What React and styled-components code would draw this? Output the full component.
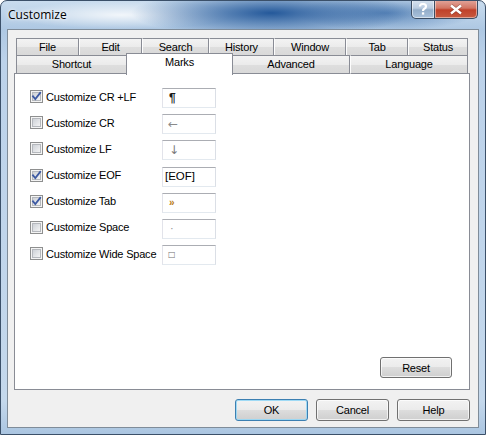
import React from "react";
import styled, { createGlobalStyle, css } from "styled-components";

const GlobalStyle = createGlobalStyle`
  html, body { margin: 0; padding: 0; background: #ffffff; }
  * { box-sizing: border-box; }
`;

const UI_FONT = `"Liberation Sans", Arial, sans-serif`;

const Window = styled.div`
  width: 486px;
  height: 435px;
  border: 1px solid #3b5069;
  border-radius: 7px 7px 0 0;
  overflow: hidden;
  display: flex;
  flex-direction: column;
  background:
    radial-gradient(ellipse 140px 24px at 270px 12px, rgba(28, 82, 150, 0.95), rgba(28, 82, 150, 0) 100%),
    radial-gradient(ellipse 90px 18px at 385px 12px, rgba(60, 110, 170, 0.75), rgba(60, 110, 170, 0) 100%),
    radial-gradient(ellipse 110px 14px at 120px 14px, rgba(255, 255, 255, 0.8), rgba(255, 255, 255, 0) 100%),
    linear-gradient(180deg, #c9dcee 0px, #aec8e3 28px, #bcd2ea 60px, #c4d8ec 400px, #a9c4e0 435px);
  font-family: ${UI_FONT};
  letter-spacing: -0.2px;
`;

const TitleBar = styled.div`
  height: 28px;
  flex: none;
  display: flex;
  align-items: flex-start;
  justify-content: space-between;
  padding: 0 7px 0 7px;
`;

const Title = styled.div`
  font-family: "Open Sans", "Noto Sans", sans-serif;
  font-size: 12px;
  letter-spacing: 0;
  color: #000;
  line-height: 14px;
  margin-top: 7px;
  text-shadow: 0 0 6px rgba(255, 255, 255, 0.9), 0 0 3px rgba(255, 255, 255, 0.9);
`;

const Controls = styled.div`
  display: flex;
  margin-top: -1px;
`;

const CtrlButton = styled.div`
  height: 19px;
  display: flex;
  align-items: center;
  justify-content: center;
  border: 1px solid #3c4d63;
  border-top: none;
  ${(p) =>
    p.$close
      ? css`
          width: 43px;
          border-radius: 0 0 5px 0;
          border-left: none;
          background: linear-gradient(180deg, #e3a79d 0%, #d27563 45%, #c0412a 55%, #c75a40 100%);
          box-shadow: inset 0 0 0 1px rgba(255, 255, 255, 0.45);
        `
      : css`
          width: 24px;
          border-radius: 0 0 0 5px;
          background: linear-gradient(180deg, #d9e4f0 0%, #b9cbe0 45%, #93adc9 55%, #a9c1dc 100%);
          box-shadow: inset 0 0 0 1px rgba(255, 255, 255, 0.5);
        `}
`;

const Client = styled.div`
  flex: none;
  width: 472px;
  height: 399px;
  margin: 0 0 0 6px;
  border: 1px solid #7f8c99;
  background: #f0f0f0;
  padding: 8px 8px 0 6px;
  display: flex;
  flex-direction: column;
`;

const TabArea = styled.div`
  display: flex;
  flex-direction: column;
  padding: 0 2px;
`;

const TabRow = styled.div`
  display: flex;
  height: ${(p) => p.$h}px;
  margin-top: ${(p) => p.$mt || 0}px;
  position: relative;
`;

const Tab = styled.div`
  flex: none;
  height: 100%;
  display: flex;
  align-items: center;
  justify-content: center;
  font-size: 11px;
  color: #000;
  white-space: nowrap;
  border-top: 1px solid #898c95;
  border-right: 1px solid #898c95;
  border-left: 1px solid #fdfdfd;
  border-bottom: 1px solid #898c95;
  background: linear-gradient(180deg, #f3f3f3 0%, #ebebeb 50%, #dedede 52%, #d9d9d9 100%);
  padding-bottom: 1px;
  &:first-child {
    border-left-color: #898c95;
  }
  ${(p) =>
    p.$active &&
    css`
      position: relative;
      z-index: 2;
      height: 22px;
      margin-top: -2px;
      margin-left: -1px;
      margin-right: -1px;
      border-left-color: #898c95;
      border-bottom: none;
      background: #ffffff;
      align-items: flex-start;
      padding-top: 2px;
    `}
`;

const Panel = styled.div`
  width: 456px;
  height: 317px;
  margin: -1px 0 0 0;
  border: 1px solid #898c95;
  background: #ffffff;
  display: flex;
  flex-direction: column;
  padding: 14px 0 0 15px;
`;

const OptionList = styled.div`
  display: flex;
  flex-direction: column;
  gap: 6.2px;
`;

const OptionRow = styled.div`
  display: grid;
  grid-template-columns: 132px 54px;
  align-items: center;
  height: 20px;
`;

const CheckLabel = styled.label`
  display: flex;
  align-items: center;
  gap: 3px;
  font-size: 11px;
  color: #000;
  white-space: nowrap;
  margin-top: -3px;
`;

const MarkBox = styled.div`
  width: 54px;
  height: 20px;
  border: 1px solid #abadb3;
  border-bottom-color: #e3e9ef;
  border-left-color: #e2e3ea;
  border-right-color: #dbdfe6;
  background: #fff;
  display: flex;
  align-items: center;
  padding-left: ${(p) => p.$pl}px;
  font-family: ${(p) => p.$font || UI_FONT};
  font-size: ${(p) => p.$size}px;
  font-weight: ${(p) => (p.$bold ? 700 : 400)};
  color: ${(p) => p.$color};
  letter-spacing: 0;
  line-height: 1;
`;

const PanelFooter = styled.div`
  margin-top: auto;
  display: flex;
  justify-content: flex-end;
  padding: 0 17px 11px 0;
`;

const Button = styled.button`
  width: ${(p) => p.$w || 73}px;
  height: ${(p) => p.$h || 22}px;
  font-family: ${UI_FONT};
  font-size: 11px;
  letter-spacing: -0.2px;
  color: #000;
  padding: 0;
  border: 1px solid ${(p) => (p.$default ? "#3c7fb1" : "#707070")};
  border-radius: 3px;
  background: linear-gradient(180deg, #f2f2f2 0%, #ebebeb 49%, #dddddd 50%, #cfcfcf 100%);
  box-shadow: inset 0 0 0 1px ${(p) => (p.$default ? "rgba(150, 215, 245, 0.9)" : "rgba(255, 255, 255, 0.7)")};
  cursor: default;
`;

const ButtonRow = styled.div`
  display: flex;
  justify-content: flex-end;
  gap: 8px;
  margin-top: 9px;
`;

function CheckBox({ checked }) {
  return (
    <svg width="13" height="13" viewBox="0 0 13 13">
      <defs>
        <linearGradient id="cbfill" x1="0" y1="0" x2="1" y2="1">
          <stop offset="0" stopColor="#cbcfd5" />
          <stop offset="1" stopColor="#f6f6f6" />
        </linearGradient>
      </defs>
      <rect x="0.5" y="0.5" width="12" height="12" fill="#f4f4f4" stroke="#8e8f8f" />
      <rect x="2.5" y="2.5" width="8" height="8" fill="url(#cbfill)" stroke="#b5b8bd" strokeWidth="1" />
      {checked && (
        <path d="M3 6.3 L5.3 9 L10.2 2.8" fill="none" stroke="#3d5aa3" strokeWidth="1.8" strokeLinecap="square" />
      )}
    </svg>
  );
}

const row1 = [
  ["File", 63],
  ["Edit", 63],
  ["Search", 67],
  ["History", 65],
  ["Window", 72],
  ["Tab", 62],
  ["Status", 60],
];

const row2 = [
  ["Shortcut", 111],
  ["Marks", 107, true],
  ["Advanced", 118],
  ["Language", 118],
];

const SYM = `"DejaVu Sans", sans-serif`;

const options = [
  { label: "Customize CR +LF", checked: true, mark: "¶", size: 12, bold: true, color: "#1a1a1a", pl: 6 },
  { label: "Customize CR", checked: false, mark: "←", size: 12, color: "#8a8a8a", pl: 5, font: SYM },
  { label: "Customize LF", checked: false, mark: "↓", size: 12, color: "#7a7a7a", pl: 6, font: SYM },
  { label: "Customize EOF", checked: true, mark: "[EOF]", size: 11.5, color: "#000", pl: 2 },
  { label: "Customize Tab", checked: true, mark: "»", size: 10, bold: true, color: "#b87a14", pl: 6 },
  { label: "Customize Space", checked: false, mark: "·", size: 11, color: "#909090", pl: 7 },
  { label: "Customize Wide Space", checked: false, mark: "□", size: 8, color: "#707070", pl: 5, font: SYM },
];

export default function App() {
  return (
    <>
      <GlobalStyle />
      <Window>
        <TitleBar>
          <Title>Customize</Title>
          <Controls>
            <CtrlButton>
              <svg width="10" height="12" viewBox="0 0 10 12">
                <path
                  d="M2 3.5 Q2 1 5 1 Q8 1 8 3.5 Q8 5 6 6 Q5 6.6 5 8"
                  fill="none"
                  stroke="#fff"
                  strokeWidth="2.2"
                />
                <rect x="3.9" y="9.3" width="2.3" height="2.3" fill="#fff" />
              </svg>
            </CtrlButton>
            <CtrlButton $close>
              <svg width="14" height="11" viewBox="0 0 14 11">
                <path d="M2 1.5 L12 9.5 M12 1.5 L2 9.5" stroke="#3a1010" strokeWidth="3.6" strokeOpacity="0.35" />
                <path d="M2 1.5 L12 9.5 M12 1.5 L2 9.5" stroke="#fff" strokeWidth="2.4" />
              </svg>
            </CtrlButton>
          </Controls>
        </TitleBar>
        <Client>
          <TabArea>
            <TabRow $h={18}>
              {row1.map(([t, w]) => (
                <Tab key={t} style={{ width: w }}>
                  {t}
                </Tab>
              ))}
            </TabRow>
            <TabRow $h={19} $mt={-1}>
              {row2.map(([t, w, a]) => (
                <Tab key={t} $active={a} style={{ width: w }}>
                  {t}
                </Tab>
              ))}
            </TabRow>
          </TabArea>
          <Panel>
            <OptionList>
              {options.map((o) => (
                <OptionRow key={o.label}>
                  <CheckLabel>
                    <CheckBox checked={o.checked} />
                    <span>{o.label}</span>
                  </CheckLabel>
                  <MarkBox $size={o.size} $bold={o.bold} $color={o.color} $pl={o.pl} $font={o.font}>
                    {o.mark}
                  </MarkBox>
                </OptionRow>
              ))}
            </OptionList>
            <PanelFooter>
              <Button $w={72} $h={21}>Reset</Button>
            </PanelFooter>
          </Panel>
          <ButtonRow>
            <Button $default>OK</Button>
            <Button>Cancel</Button>
            <Button>Help</Button>
          </ButtonRow>
        </Client>
      </Window>
    </>
  );
}
